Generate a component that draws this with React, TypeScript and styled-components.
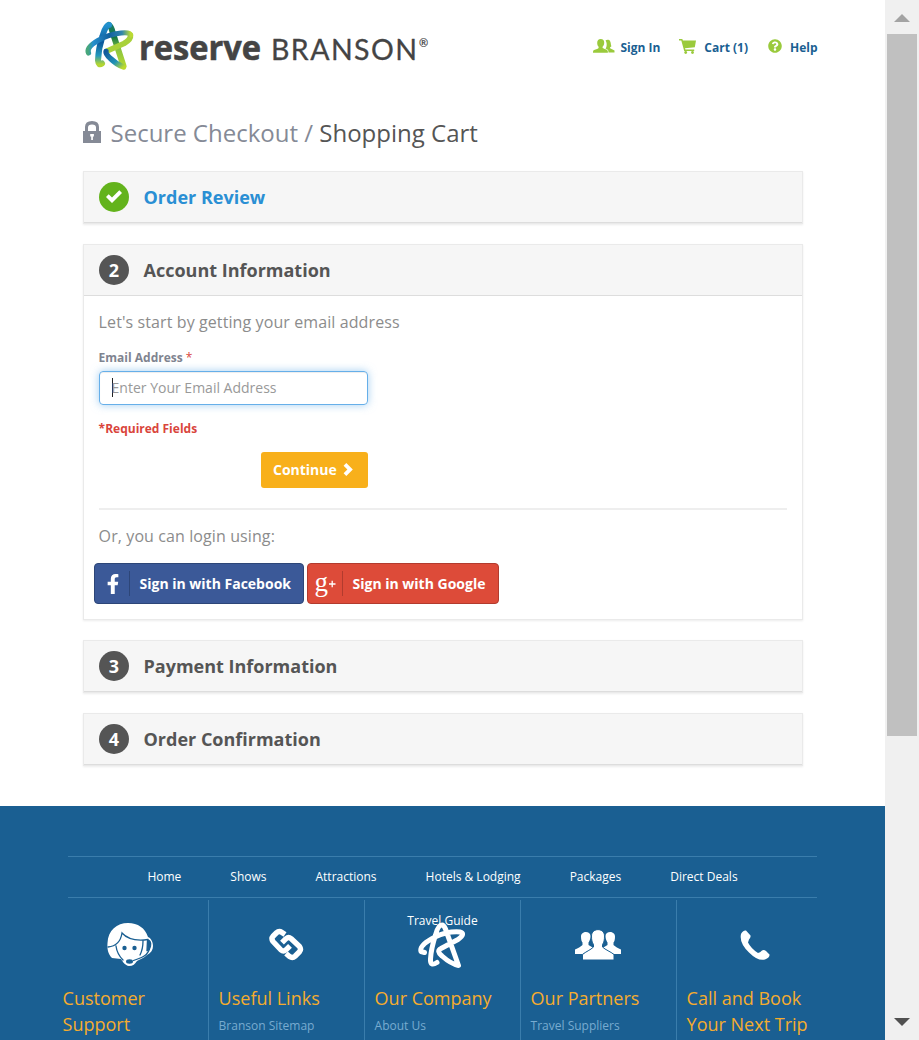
import React from 'react';
import styled, { createGlobalStyle } from 'styled-components';
import { FaFacebookF, FaQuestionCircle } from 'react-icons/fa';

const GlobalStyle = createGlobalStyle`
  *, *::before, *::after { box-sizing: border-box; }
  html, body { margin: 0; padding: 0; height: 100%; overflow: hidden; }
  body { font-family: 'Open Sans', 'Noto Sans', sans-serif; color: #555; background: #fff; }
  h1, h2, h3, p { margin: 0; font-weight: 400; }
  svg { display: block; flex: none; }
`;

const Shell = styled.div`
  display: flex;
  height: 1040px;
  overflow: hidden;
`;

const Page = styled.div`
  width: 885px;
  flex: none;
  overflow: hidden;
`;

const Header = styled.header`
  display: flex;
  justify-content: space-between;
  height: 110px;
  padding: 16px 67.500px 0 80px;
`;

const UserNav = styled.nav`
  display: flex;
  align-items: center;
  height: 24px;
  margin-top: 20px;
`;

const UserLink = styled.a<{ $gap: number; $before?: number }>`
  display: flex;
  align-items: center;
  gap: ${p => p.$gap}px;
  margin-left: ${p => p.$before ?? 0}px;
  font-size: 12px;
  line-height: 24px;
  font-weight: 700;
  color: #1a5f92;
  white-space: nowrap;
  svg { color: #9aca3c; margin-bottom: 4px; }
`;

const Main = styled.main`
  width: 720px;
  height: 696px;
  margin-left: 83px;
`;

const Title = styled.h1`
  display: flex;
  align-items: center;
  height: 44px;
  margin-bottom: 17px;
  font-size: 24px;
  color: #858a96;
  white-space: pre;
  svg { margin: 0 9.500px 0 0; }
`;

const Dark = styled.span`
  color: #555;
`;

const Panel = styled.section`
  border: 1px solid #eaeaea;
  margin-bottom: 20px;
  background: #fff;
  box-shadow: 0 1px 2px rgba(0, 0, 0, 0.08);
`;

const PanelHead = styled.div`
  display: flex;
  align-items: center;
  height: 51px;
  padding-left: 15px;
  background: #f6f6f6;
  border-bottom: 1px solid #ddd;
`;

const Badge = styled.span<{ $done?: boolean }>`
  display: flex;
  align-items: center;
  justify-content: center;
  width: 30px;
  height: 30px;
  margin-right: 14.500px;
  border-radius: 50%;
  background: ${p => (p.$done ? '#63b31c' : '#555')};
  color: #fff;
  font-size: 18px;
  font-weight: 700;
`;

const PanelTitle = styled.h2<{ $done?: boolean }>`
  font-size: 18px;
  font-weight: 700;
  line-height: 26px;
  color: ${p => (p.$done ? '#2a8fd4' : '#555')};
`;

const PanelBody = styled.div`
  height: 323px;
  padding: 14px 15px 0 14.600px;
`;

const Lead = styled.p`
  font-size: 16px;
  line-height: 24px;
  letter-spacing: 0.1px;
  color: #8c8c8c;
`;

const Label = styled.label`
  display: block;
  margin-top: 15px;
  font-size: 12px;
  line-height: 18px;
  font-weight: 700;
  color: #7f8490;
`;

const Star = styled.span`
  color: #d9453c;
  font-weight: 400;
`;

const Field = styled.div`
  display: flex;
  align-items: center;
  width: 269px;
  height: 34px;
  margin-top: 4px;
  padding: 0 0 2px 12px;
  border: 1px solid #66afe9;
  border-radius: 4px;
  box-shadow: inset 0 1px 1px rgba(0, 0, 0, 0.075), 0 0 8px rgba(102, 175, 233, 0.6);
  font-size: 14px;
  color: #999;
`;

const Caret = styled.span`
  width: 1px;
  height: 19px;
  margin-right: -1px;
  background: #222;
`;

const Required = styled.p`
  margin-top: 15px;
  font-size: 12px;
  line-height: 18px;
  font-weight: 700;
  color: #d9453c;
`;

const Continue = styled.button`
  display: flex;
  align-items: center;
  gap: 6px;
  width: 107px;
  height: 36px;
  margin: 14px 0 0 162.400px;
  padding: 0 0 1px 12px;
  border: 0;
  border-radius: 3px;
  background: #f8b01b;
  color: #fff;
  font: 700 14px 'Open Sans', sans-serif;
`;

const Rule = styled.div`
  height: 2px;
  margin: 20px 0 14px;
  background: #eee;
`;

const SocialRow = styled.div`
  display: flex;
  gap: 3px;
  margin: 15px 0 0 -4.600px;
`;

const Social = styled.button<{ $bg: string; $edge: string; $width: number }>`
  display: flex;
  align-items: center;
  width: ${p => p.$width}px;
  height: 41px;
  padding: 0;
  border: 1px solid ${p => p.$edge};
  border-radius: 4px;
  background: ${p => p.$bg};
  color: #fff;
  font: 700 14px 'Open Sans', sans-serif;
  white-space: nowrap;
`;

const SocialIcon = styled.span<{ $edge: string }>`
  display: flex;
  align-items: center;
  justify-content: center;
  width: 35px;
  height: 25px;
  margin-right: 9.500px;
  padding-left: 2px;
  border-right: 1px solid ${p => p.$edge};
  font-weight: 400;
`;

const Footer = styled.footer`
  height: 234px;
  padding-top: 50px;
  background: #1a5f92;
`;

const FooterNav = styled.nav`
  display: flex;
  flex-wrap: wrap;
  justify-content: center;
  align-content: flex-start;
  width: 749px;
  height: 42px;
  margin-left: 68px;
  border-top: 1px solid #3a7dac;
  border-bottom: 1px solid #3a7dac;
`;

const FooterNavLink = styled.a`
  padding: 0 24.500px;
  margin-bottom: 4px;
  font-size: 12px;
  line-height: 40px;
  color: #fff;
`;

const Columns = styled.div`
  display: flex;
  margin: 2px 0 0 53px;
`;

const Column = styled.div`
  width: 156px;
  height: 160px;
  padding: 0 10px 0 9.600px;
  border-right: 1px solid #3a7dac;
  &:last-child { border-right: 0; }
`;

const ColumnIcon = styled.div`
  display: flex;
  justify-content: center;
  height: 85px;
  padding-top: 21px;
`;

const ColumnTitle = styled.h3`
  font-size: 18px;
  line-height: 26px;
  color: #f5ac2e;
`;

const ColumnLink = styled.a`
  display: block;
  margin-top: 6px;
  font-size: 12px;
  line-height: 18px;
  color: #78abd0;
`;

const Scrollbar = styled.div`
  display: flex;
  flex-direction: column;
  align-items: center;
  width: 34px;
  background: #f0f0f0;
`;

const ArrowBox = styled.div<{ $down?: boolean }>`
  display: flex;
  align-items: center;
  height: 34px;
  padding-top: ${p => (p.$down ? 0 : 2)}px;
  padding-bottom: ${p => (p.$down ? 2 : 0)}px;
`;

const Thumb = styled.div`
  width: 30px;
  height: 702px;
  margin-bottom: auto;
  background: #c0c0c0;
`;

const Logo = () => (
  <svg width="352" height="60" viewBox="80 16 352 60" fill="none" strokeLinecap="round" strokeLinejoin="round">
    <defs>
      <linearGradient id="blueLeg" x1="0" y1="0" x2="0" y2="1">
        <stop offset="0" stopColor="#2392ce" /><stop offset=".45" stopColor="#0c599c" /><stop offset=".78" stopColor="#2499bd" /><stop offset="1" stopColor="#b3d532" />
      </linearGradient>
      <linearGradient id="greenLeg" x1="0" y1="0" x2="0" y2="1">
        <stop offset="0" stopColor="#197b64" /><stop offset=".3" stopColor="#147743" /><stop offset=".6" stopColor="#8bc53f" /><stop offset="1" stopColor="#b4d832" />
      </linearGradient>
      <linearGradient id="band" x1="0" y1="0" x2="1" y2="0">
        <stop offset="0" stopColor="#48a77b" /><stop offset=".12" stopColor="#258fcd" /><stop offset=".5" stopColor="#12619f" /><stop offset=".8" stopColor="#3086ad" /><stop offset="1" stopColor="#bbda33" />
      </linearGradient>
      <linearGradient id="foot" x1="0" y1="0" x2="1" y2="1">
        <stop offset="0" stopColor="#12599c" /><stop offset=".6" stopColor="#1f91b5" /><stop offset="1" stopColor="#bcda2c" />
      </linearGradient>
    </defs>
    <path d="M109 25Q111.500 27 112.500 32L123.500 66" stroke="url(#greenLeg)" strokeWidth="6" />
    <path d="M102 63.500Q98.500 66 98 60.500Q98.500 48 102.500 36Q105.500 25 109 25" stroke="url(#blueLeg)" strokeWidth="6" />
    <path d="M130.500 35Q131 39.500 124 43.500L107 51" stroke="#a9d13a" strokeWidth="5.600" />
    <path d="M88.500 53Q86 47.500 98 40.500Q108 34.500 121 33Q130 32 130.500 35" stroke="url(#band)" strokeWidth="5.200" />
    <path d="M106 51.500Q105.500 54 110.500 58.500Q116.500 64.500 123.500 67" stroke="url(#foot)" strokeWidth="5.400" />
    <g fill="#444" stroke="none">
      <text x="139" y="60" fontFamily="Open Sans" fontWeight="700" fontSize="34" textLength="122" lengthAdjust="spacingAndGlyphs" stroke="#444" strokeWidth=".6">reserve</text>
      <text x="271" y="60" fontFamily="Lato" fontSize="28.500" textLength="146" lengthAdjust="spacing" stroke="#444" strokeWidth=".3">BRANSON</text>
      <text x="419" y="47" fontFamily="Lato" fontSize="11" stroke="#444" strokeWidth=".2">®</text>
    </g>
  </svg>
);

const UsersIcon = () => (
  <svg width="22" height="14" viewBox="0 0 22 14" fill="currentColor">
    <path d="M12.500 1.500C13.500 .8 16 .3 17 2c1 1.700.7 3.500 1.300 5 .2.700-.8 1-1.200 1.300v1l4.400 2.200V13.500H15.500c0-2.500-1-3-3-3.900 1.500-1.500 1.700-6 0-8.100z" />
    <path d="M7.700 0c2.300 0 3.600 1.400 3.500 3.600 0 2.300-.8 3.400-1.600 4.100v1.200c1.200.9 4.800 1.300 5.200 3.100l.1 1.700H0c0-1 .1-2 .6-2.400 1.300-1 4.300-1.300 5-2.400V7.700C4.700 6.900 4.200 5.600 4.200 3.700 4.200 1.400 5.500 0 7.700 0z" />
  </svg>
);

const CartIcon = () => (
  <svg width="17" height="15" viewBox="0 0 17 15" fill="currentColor">
    <path d="M0 0h3.300l.6 1.500H17l-1.200 6.800L6 9.200l.4 1.300h8.800V12H5.200L2.300 1.500H0z" />
    <circle cx="6.700" cy="13.500" r="1.400" /><circle cx="13.500" cy="13.500" r="1.400" />
  </svg>
);

const LockIcon = () => (
  <svg width="18" height="22" viewBox="0 0 18 22" fill="#858a96">
    <path fillRule="evenodd" d="M2 10V6Q2 0 9 0t7 6v4h2v12H0V10zM5 10h8V6.500Q13 3.500 9 3.500T5 6.500zM7.200 13v2.600h1V19h1.700v-3.400h1V13z" />
  </svg>
);

const CheckIcon = () => (
  <svg width="18" height="16" viewBox="0 0 18 16">
    <path d="M1 8L3.700 5.300L7 8.600L14.300 1.300L17 4L7 14z" fill="#fff" />
  </svg>
);

const ChevronIcon = () => (
  <svg width="11" height="13" viewBox="0 0 11 13">
    <path d="M3.300 0L9.800 6.500L3.300 13L.6 10.300L4.400 6.500L.6 2.700z" fill="#fff" />
  </svg>
);

const GooglePlusIcon = () => (
  <svg width="26" height="39" viewBox="0 -9 26 39">
    <text x="1.500" y="18" fill="#fff" fontFamily="Liberation Serif" fontSize="27" fontWeight="400" textLength="13.500" lengthAdjust="spacingAndGlyphs">g</text>
    <path d="M16 11h6.500M19.200 7.700v6.600" stroke="#fff" strokeWidth="1.300" />
  </svg>
);

const AgentIcon = () => (
  <svg width="47" height="46" viewBox="0 0 47 46" fill="none">
    <path d="M5 37C1 33 0 28 .5 22 1 9 10 2 21 2c10 0 17 5 20 14 3 1 5 5 5 9s-2 7-6 9c-3 3-7 4-10 6-2 3-4 5-8 5-4-.5-6-4-8-7z" fill="#fff" />
    <g stroke="#1a5f92" strokeWidth="1.300" strokeLinecap="round">
      <path d="M1 26q12-1 14-14 8 9 26 6.500M9 25q1 8 7 14M36 20q0 8-3 14" />
      <path d="M42.500 28q-2 6-8 8.500-5 2-8 3" />
      <path d="M40.500 19q4 1 3 6-1 4-3.500 4.500z" fill="#1a5f92" />
    </g>
    <g fill="#1a5f92"><circle cx="17.500" cy="27" r="2.200" /><circle cx="27.500" cy="27" r="2.200" /><ellipse cx="22.500" cy="40.500" rx="3.500" ry="2.200" /></g>
  </svg>
);

const LinkIcon = () => (
  <svg width="36" height="46" viewBox="0 0 36 46" fill="none" stroke="#fff" strokeWidth="5.400" strokeLinejoin="round">
    <path d="M17 13.500L14 11.500Q11 9.500 8.500 11.800L5 15.200Q3 17.500 5 20.500L13 29Q15.500 31 18 28.800L22 24.800" />
    <path d="M18 32.500L21.500 35.500Q24.500 37.500 27 35.200L31.500 30.800Q33.500 28.500 31.500 25.500L23 17.500Q20.500 15.500 18 17.700L14 21.700" />
  </svg>
);

const StarIcon = () => (
  <svg width="50" height="50" viewBox="-1 0 50 50" fill="none" stroke="#fff" strokeWidth="5" strokeLinecap="round" strokeLinejoin="round">
    <path d="M19 41.500Q12 46 12.500 38Q13 28 17.500 14Q20 4 24 4Q26 4 27.500 8L40.500 44.500Q33 43 24 35Q18 30 23 27.500L40 18.500Q48 12.500 42 11Q30 10 17 16Q1 24 3 30.500L6.500 31.500" />
  </svg>
);

const PartnersIcon = () => (
  <svg width="46" height="46" viewBox="0 0 46 46" fill="#fff">
    <path d="M15.500 15c0 3-1 5-2 6.500V24l5 3-11 6H0v-4.500c3-1.500 5.500-2.500 7.500-4.500v-2.500c-1-1-1.500-3-1.500-6 0-6 9.500-6 9.500-.5zM30.500 15c0 3 1 5 2 6.500V24l-5 3 11 6H46v-4.500c-3-1.500-5.500-2.500-7.500-4.500v-2.500c1-1 1.500-3 1.500-6 0-6-9.500-6-9.500-.5z" />
    <path d="M16.500 15c0-8.500 13-8.500 13 0 0 4-.5 6.500-2 8.500V26c3 3 8 4.500 11.500 7.500V39H7.500v-5.500C11 30.500 15.500 29 18.500 26v-2.500c-1.500-2-2-4.500-2-8.500z" stroke="#1a5f92" strokeWidth="1" />
  </svg>
);

const PhoneIcon = () => (
  <svg width="30" height="46" viewBox="0 0 30 46" fill="#fff">
    <path d="M1 13Q3 9 6 9.500L10.500 14.500Q11 16.500 9 18.500L8 21.500Q11 27.500 18 32Q20 31.500 22 29.500Q24 28.500 26 30L29.500 33.500Q30 36.500 25 38.500Q18 40.500 9 31.500Q-1 21.500 1 13z" />
  </svg>
);

const Arrow = ({ down = false }: { down?: boolean }) => (
  <svg width="16" height="8" viewBox="0 0 16 8" fill={down ? '#505050' : '#a3a3a3'}>
    <path d={down ? 'M0 0h16L8 8z' : 'M0 8h16L8 0z'} />
  </svg>
);

const footerLinks = ['Home', 'Shows', 'Attractions', 'Hotels & Lodging', 'Packages', 'Direct Deals', 'Travel Guide'];

const footerColumns = [
  { title: 'Customer Support', icon: <AgentIcon /> },
  { title: 'Useful Links', link: 'Branson Sitemap', icon: <LinkIcon /> },
  { title: 'Our Company', link: 'About Us', icon: <StarIcon /> },
  { title: 'Our Partners', link: 'Travel Suppliers', icon: <PartnersIcon /> },
  { title: 'Call and Book Your Next Trip', icon: <PhoneIcon /> },
];

const Step = ({ n, title, done, children }: { n?: number; title: string; done?: boolean; children?: React.ReactNode }) => (
  <Panel>
    <PanelHead>
      <Badge $done={done}>{done ? <CheckIcon /> : n}</Badge>
      <PanelTitle $done={done}>{title}</PanelTitle>
    </PanelHead>
    {children}
  </Panel>
);

export default function App() {
  return (
    <Shell>
      <GlobalStyle />
      <Page>
        <Header>
          <Logo />
          <UserNav>
            <UserLink $gap={5}><UsersIcon />Sign In</UserLink>
            <UserLink $gap={8} $before={19}><CartIcon />Cart (1)</UserLink>
            <UserLink $gap={8} $before={20}><FaQuestionCircle size={14} />Help</UserLink>
          </UserNav>
        </Header>
        <Main>
          <Title><LockIcon />Secure Checkout / <Dark>Shopping Cart</Dark></Title>
          <Step title="Order Review" done />
          <Step n={2} title="Account Information">
            <PanelBody>
              <Lead>Let's start by getting your email address</Lead>
              <Label>Email Address <Star>*</Star></Label>
              <Field><Caret />Enter Your Email Address</Field>
              <Required>*Required Fields</Required>
              <Continue>Continue <ChevronIcon /></Continue>
              <Rule />
              <Lead>Or, you can login using:</Lead>
              <SocialRow>
                <Social $bg="#3b5998" $edge="#2d4678" $width={210}>
                  <SocialIcon $edge="#2d4678"><FaFacebookF size={20} /></SocialIcon>Sign in with Facebook
                </Social>
                <Social $bg="#dd4b39" $edge="#b23b2e" $width={192}>
                  <SocialIcon $edge="#b23b2e"><GooglePlusIcon /></SocialIcon>Sign in with Google
                </Social>
              </SocialRow>
            </PanelBody>
          </Step>
          <Step n={3} title="Payment Information" />
          <Step n={4} title="Order Confirmation" />
        </Main>
        <Footer>
          <FooterNav>
            {footerLinks.map(l => <FooterNavLink key={l}>{l}</FooterNavLink>)}
          </FooterNav>
          <Columns>
            {footerColumns.map(c => (
              <Column key={c.title}>
                <ColumnIcon>{c.icon}</ColumnIcon>
                <ColumnTitle>{c.title}</ColumnTitle>
                {c.link && <ColumnLink>{c.link}</ColumnLink>}
              </Column>
            ))}
          </Columns>
        </Footer>
      </Page>
      <Scrollbar>
        <ArrowBox><Arrow /></ArrowBox>
        <Thumb />
        <ArrowBox $down><Arrow down /></ArrowBox>
      </Scrollbar>
    </Shell>
  );
}
